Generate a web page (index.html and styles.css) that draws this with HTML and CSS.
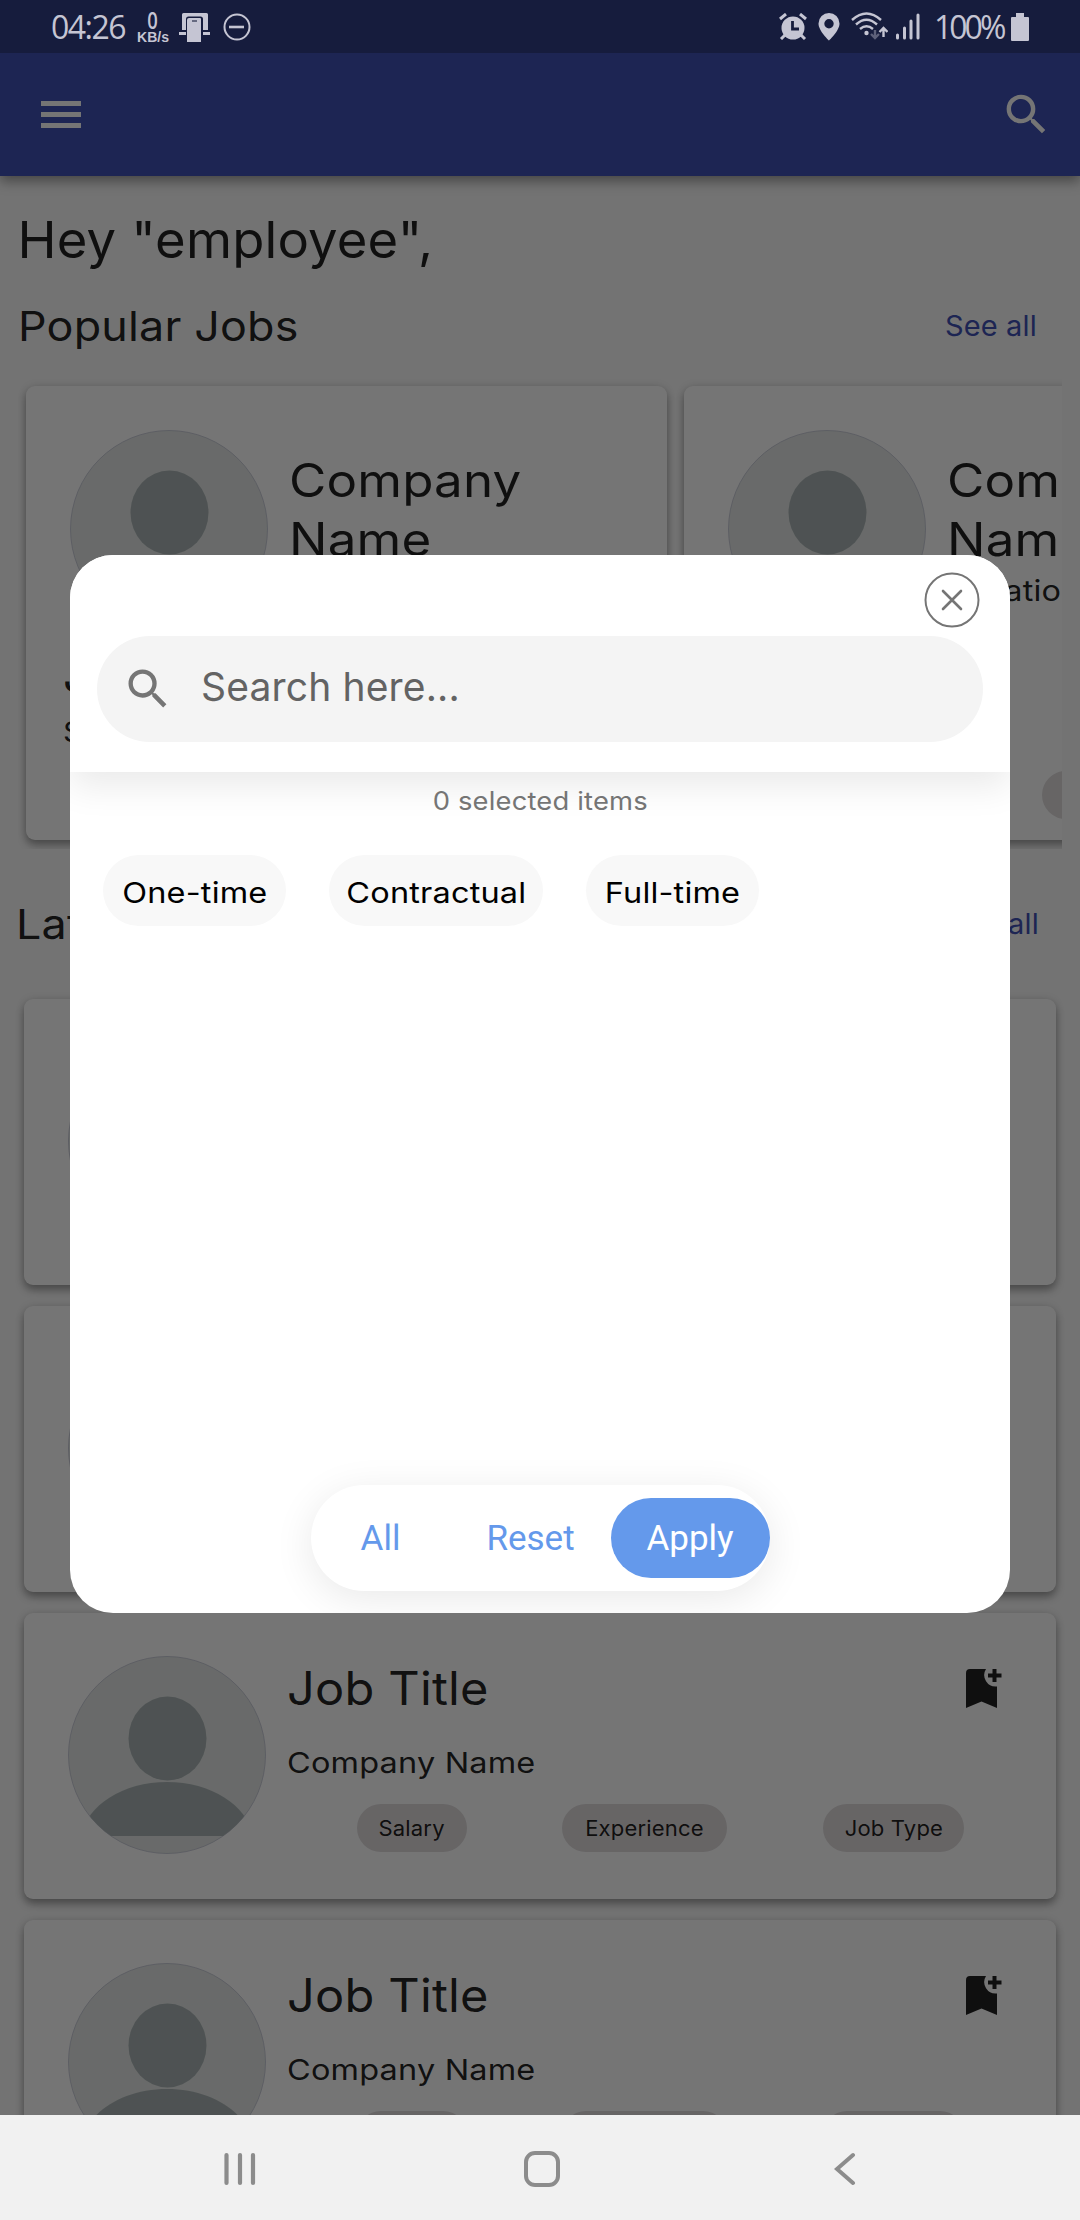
FILE: index.html
```html
<!DOCTYPE html>
<html lang="en">
<head>
<meta charset="utf-8">
<title>Jobs</title>
<link rel="stylesheet" href="styles.css">
</head>
<body>
<svg width="0" height="0" class="defs">
  <symbol id="search" viewBox="0 0 24 24"><path d="M15.5 14h-.79l-.28-.27A6.47 6.47 0 0 0 16 9.5 6.5 6.5 0 1 0 9.5 16c1.61 0 3.09-.59 4.23-1.57l.27.28v.79l5 4.99L20.49 19l-4.99-5zm-6 0C7.01 14 5 11.99 5 9.5S7.01 5 9.5 5 14 7.01 14 9.5 11.99 14 9.5 14z"/></symbol>
  <symbol id="avatar" viewBox="0 0 198 198">
    <clipPath id="round"><circle cx="99" cy="99" r="98.5"/></clipPath>
    <circle cx="99" cy="99" r="98.5" fill="#e4e8e6" stroke="#c0c3d2" stroke-width=".8"/>
    <ellipse cx="99.500" cy="82.500" rx="39" ry="42" fill="#abb4b6"/>
    <path clip-path="url(#round)" d="M13 180C19 149 55 126 99 126s80 23 86 54z" fill="#abb4b6"/>
  </symbol>
  <symbol id="bookmark" viewBox="0 0 36 39"><path d="M4 0H20A11.500 11.500 0 0 0 31 17.500V39L15.500 32.500 0 39V4a4 4 0 0 1 4-4z"/><path d="M26.500 0h4v4.500h5v4h-5V13h-4V8.500H22v-4h4.500z"/></symbol>
</svg>
<div class="screen">
  <header class="status">
    <div class="status-left">
      <span class="clock">04:26</span>
      <span class="speed"><b>0</b><small>KB/s</small></span>
      <svg class="ic-phone" width="31" height="30" viewBox="0 0 31 30"><path d="M3 1.500Q3 0 4.500 0h23Q29 0 29 1.500V17h-5V6Q24 3.500 21.500 3.500h-12Q7 3.500 7 6v11H3zM0 19h7v3H0zM24 19h7v3h-7z"/><path d="M10 5h11q1 0 1 1v23H8V7q0-2 2-2z"/><path d="M13 7h5v2h-5z" fill="#666a80"/></svg>
      <svg class="ic-dnd" width="28" height="28" viewBox="0 0 28 28" fill="none" stroke="#c5c5d3" stroke-width="2"><circle cx="14" cy="14" r="12.500"/><path d="M6 14h15" stroke-width="2.600"/></svg>
    </div>
    <div class="status-right">
      <svg class="ic-alarm" width="28" height="27" viewBox="0 0 28 27"><circle cx="14" cy="15" r="11.500"/><path d="M1 6l6-5M27 6l-6-5M6 22l-4 4M22 22l4 4" stroke="#c5c5d3" stroke-width="3"/><path d="M13.500 8v8H20" fill="none" stroke="#161c3d" stroke-width="2.800"/></svg>
      <svg class="ic-pin" width="22" height="28" viewBox="0 0 22 28"><path fill-rule="evenodd" d="M11 0a10.500 10.500 0 0 1 10.500 10.500C21.500 18 11 27.500 11 27.500S.5 18 .5 10.500A10.500 10.500 0 0 1 11 0zm0 6a4.700 4.700 0 1 0 0 9.400A4.700 4.700 0 0 0 11 6z"/></svg>
      <svg class="ic-wifi" width="37" height="28" viewBox="0 0 37 28"><g fill="none" stroke="#c5c5d3" stroke-width="2.400"><path d="M1 8Q15.500-5 30 8M5 12.500Q15.500 3 26 12.500M9 17q6.500-5.500 13 0"/><path d="M32.500 25v-8M28.500 20l4-4 4 4"/><path d="M24 18v8M20 22l4 4 4-4" stroke="#5d607a"/></g><circle cx="15.500" cy="21" r="2.200"/></svg>
      <svg class="ic-signal" width="24" height="27" viewBox="0 0 24 27"><g stroke="#c5c5d3" stroke-width="3" stroke-linecap="round"><path d="M1.500 22v3M8.500 15v10M15 8v17M22 2v23"/></g></svg>
      <span class="pct">100%</span>
      <svg class="ic-batt" width="18" height="28" viewBox="0 0 18 28"><path d="M5 0h8v4h4q1 0 1 1v22q0 1-1 1H1q-1 0-1-1V5q0-1 1-1h4z"/></svg>
    </div>
  </header>
  <nav class="appbar">
    <div class="menu"><i></i><i></i><i></i></div>
    <svg class="appbar-search" width="53" height="53"><use href="#search"/></svg>
  </nav>
  <main>
    <h1>Hey "employee",</h1>
    <div class="section"><h2>Popular Jobs</h2><a>See all</a></div>
    <div class="carousel">
      <article class="pop-card">
        <div class="pop-head"><svg class="avatar"><use href="#avatar"/></svg><div><h3>Company<br>Name</h3><p>Location</p></div></div>
        <h4>Job Title</h4><p class="salary">Salary</p>
        <div class="pop-chips"><span class="chip"><span>Salary</span></span><span class="chip exp"><span>Experience</span></span></div>
      </article>
      <article class="pop-card">
        <div class="pop-head"><svg class="avatar"><use href="#avatar"/></svg><div><h3>Company<br>Name</h3><p>Location</p></div></div>
        <h4>Job Title</h4><p class="salary">Salary</p>
        <div class="pop-chips"><span class="chip"><span>Salary</span></span><span class="chip exp"><span>Experience</span></span></div>
      </article>
    </div>
    <div class="section latest"><h2>Latest Jobs</h2><a>See all</a></div>
    <div class="list">
      <article class="job"><svg class="avatar"><use href="#avatar"/></svg></article>
      <article class="job"><svg class="avatar"><use href="#avatar"/></svg></article>
      <article class="job">
        <svg class="avatar"><use href="#avatar"/></svg>
        <div class="job-body">
          <div class="job-top"><h3>Job Title</h3><svg class="mark" width="36" height="39"><use href="#bookmark"/></svg></div>
          <p>Company Name</p>
          <div class="chips"><span class="chip"><span>Salary</span></span><span class="chip exp"><span>Experience</span></span><span class="chip type"><span>Job Type</span></span></div>
        </div>
      </article>
      <article class="job">
        <svg class="avatar"><use href="#avatar"/></svg>
        <div class="job-body">
          <div class="job-top"><h3>Job Title</h3><svg class="mark" width="36" height="39"><use href="#bookmark"/></svg></div>
          <p>Company Name</p>
          <div class="chips"><span class="chip"><span>Salary</span></span><span class="chip exp"><span>Experience</span></span><span class="chip type"><span>Job Type</span></span></div>
        </div>
      </article>
    </div>
  </main>
  <footer class="sysnav">
    <svg width="32" height="34" viewBox="0 0 32 34"><path d="M2.500 3v28M16 3v28M29 3v28" stroke="#8c8c8c" stroke-width="4.200" stroke-linecap="round"/></svg>
    <svg class="home" width="36" height="36" viewBox="0 0 36 36"><rect x="2" y="2" width="32" height="32" rx="9" fill="none" stroke="#8c8c8c" stroke-width="4"/></svg>
    <svg width="22" height="34" viewBox="0 0 22 34"><path d="M19 3L3 17l16 14" fill="none" stroke="#8c8c8c" stroke-width="4" stroke-linecap="round"/></svg>
  </footer>
  <div class="scrim"></div>
  <section class="dialog">
    <div class="dialog-head">
      <svg class="close" width="56" height="56" viewBox="0 0 56 56" fill="none" stroke="#757575" stroke-width="2"><circle cx="28" cy="28" r="26.500"/><path d="M19 19l18 18M37 19L19 37" stroke-width="2.600" stroke-linecap="round"/></svg>
      <div class="field"><svg width="52" height="52"><use href="#search"/></svg><span>Search here...</span></div>
    </div>
    <p class="count">0 selected items</p>
    <div class="options"><div class="one"><span>One-time</span></div><div class="contract"><span>Contractual</span></div><div class="full"><span>Full-time</span></div></div>
    <div class="actions"><span class="all">All</span><span class="reset">Reset</span><span class="apply">Apply</span></div>
  </section>
</div>
</body>
</html>
```
FILE: styles.css
```css
* { box-sizing: border-box; }
body { margin: 0; font-family: Inter, "Liberation Sans", sans-serif; }
h1, h2, h3, h4, p { margin: 0; font-weight: 400; }
svg { display: block; flex: none; }
.defs { position: absolute; }
.screen { position: relative; width: 1080px; height: 2220px; overflow: hidden; display: flex; flex-direction: column; background: #fafafa; color: rgba(0,0,0,.87); letter-spacing: .16px; }

/* wide letterforms */
h1, h2, h3, h4, .pop-head p, .salary, .job-body p { transform-origin: 0 50%; white-space: nowrap; }
h1 { transform: scaleX(1.031); }
h2 { transform: scaleX(1.094); }
h3 { transform: scaleX(1.11); }
h4 { transform: scaleX(1.11); }
.pop-head p, .salary, .job-body p { transform: scaleX(1.12); }

.status { position: relative; z-index: 5; height: 53px; flex: none; display: flex; justify-content: space-between; padding: 0 51px; background: #161c3d; color: #c5c5d3; fill: #c5c5d3; font-family: "Open Sans", sans-serif; letter-spacing: 0; }
.status-left, .status-right { display: flex; align-items: flex-start; white-space: nowrap; }
.clock { width: 86px; font-size: 32px; line-height: 54px; letter-spacing: -1.5px; }
.speed { width: 32px; margin-top: 9px; display: flex; flex-direction: column; align-items: center; }
.speed b { font-size: 23px; line-height: 23px; font-weight: 600; transform: scaleX(.8); }
.speed small { font: bold 14px/10px "Liberation Sans", sans-serif; }
.ic-phone { margin: 13px 0 0 10px; }
.ic-dnd { margin: 13px 0 0 13px; }
.ic-alarm { margin-top: 13px; }
.ic-pin { margin: 13px 0 0 11px; }
.ic-wifi { margin: 12px 0 0 11px; }
.ic-signal { margin: 13px 0 0 8px; }
.pct { width: 77px; margin-left: 14px; font-size: 32px; line-height: 54px; letter-spacing: -3px; }
.ic-batt { margin-top: 13px; }

.appbar { position: relative; height: 123px; flex: none; display: flex; justify-content: space-between; align-items: center; padding: 0 27px 0 41px; background: #3f51b5; fill: #fff; box-shadow: 0 5px 12px rgba(0,0,0,.4); }
.menu { display: flex; flex-direction: column; gap: 6px; }
.menu i { width: 40px; height: 5px; background: #fff; }

main { flex: 1; min-height: 0; overflow: hidden; padding-top: 34px; }
h1 { padding-left: 17px; font-size: 51px; line-height: 60px; }
.section { display: flex; justify-content: space-between; margin-top: 31px; padding: 0 43px 0 18px; line-height: 50px; }
.section h2 { font-size: 41px; }
.section a { font-size: 28px; color: #3f51b5; transform: scaleX(1.035); transform-origin: 100% 50%; }
.section.latest { margin-top: 50px; padding: 0 41px 0 16px; }
.carousel { display: flex; gap: 17px; margin: 27px 18px 0; padding: 8px 8px 9px; overflow: hidden; }
.pop-card, .job { background: #fff; border-radius: 9px; box-shadow: 0 5px 9px rgba(0,0,0,.32), 0 1px 10px rgba(0,0,0,.12); }
.pop-card { width: 641px; height: 454px; flex: none; padding: 44px 37px; }
.pop-head { display: flex; height: 222px; padding-left: 7px; gap: 21px; }
.avatar { width: 198px; height: 198px; }
.pop-head h3 { margin-top: 21px; font-size: 46px; line-height: 59px; }
.pop-head p { margin-top: 2px; font-size: 29px; line-height: 40px; }
h4 { font-size: 41px; line-height: 50px; }
.salary { margin-top: 10px; font-size: 28px; line-height: 40px; }
.pop-chips { display: flex; gap: 120px; padding-left: 91px; margin-top: 19px; }
.chip { width: 110px; height: 48px; border-radius: 24px; background: #e0dcdd; font-size: 21px; line-height: 49px; text-align: center; white-space: nowrap; }
.chip span { display: inline-block; transform: scaleX(1.05); }
.exp { width: 165px; }
.type { width: 141px; }
.list { margin: 49.500px 24px 0; display: flex; flex-direction: column; gap: 21px; }
.job { height: 286px; flex: none; display: flex; gap: 21px; padding: 43px 44px; }
.job-body { flex: 1; }
.job-top { display: flex; justify-content: space-between; height: 80px; padding-right: 10px; }
.job-top h3 { font-size: 46px; line-height: 64px; transform: scaleX(1.06); }
.mark { margin-top: 13px; fill: rgba(0,0,0,.87); }
.job-body p { font-size: 29px; line-height: 54px; }
.chips { display: flex; justify-content: space-around; margin: 14px 0 0 22px; }

.sysnav { position: relative; z-index: 5; height: 105px; flex: none; display: flex; justify-content: space-between; align-items: center; padding: 3px 224px 0 224px; background: #f1f1f1; }
.home { margin-right: 7px; }
.scrim { position: absolute; inset: 53px 0 105px; background: rgba(0,0,0,.54); }

.dialog { position: absolute; left: 70px; top: 555px; width: 940px; height: 1058px; border-radius: 43px; overflow: hidden; background: #fff; display: flex; flex-direction: column; align-items: center; color: #757575; }
.dialog-head { width: 940px; height: 217px; background: #fff; box-shadow: 0 14px 34px rgba(0,0,0,.085); display: flex; flex-direction: column; align-items: flex-end; padding: 17px 27px 0; }
.close { margin-right: 3px; }
.field { align-self: stretch; height: 106px; margin-top: 8px; border-radius: 53px; background: #f4f4f4; display: flex; align-items: center; padding-left: 25px; fill: #757575; color: #636363; font-size: 39px; }
.field span { margin: -5px 0 0 27px; line-height: 50px; }
.count { position: relative; font-size: 25px; line-height: 30px; margin-top: 14px; transform: scaleX(1.095); }
.options { align-self: stretch; display: flex; gap: 43px; margin-top: 39px; padding-left: 33px; color: #000; }
.options div { height: 71px; border-radius: 36px; background: #f8f8f8; font-size: 29px; line-height: 75px; text-align: center; white-space: nowrap; }
.options span { display: inline-block; transform: scaleX(1.12); }
.options .one { width: 183px; }
.options .contract { width: 214px; }
.options .full { width: 173px; }
.actions { width: 459px; height: 106px; margin-top: 559px; border-radius: 53px; display: flex; align-items: center; background: #fff; box-shadow: 0 8px 40px rgba(0,0,0,.09); font: 35px/81px Roboto, sans-serif; letter-spacing: 0; color: #6499eb; text-align: center; }
.actions .all { width: 140px; }
.actions .reset { width: 160px; }
.actions .apply { width: 159px; height: 80px; border-radius: 40px; background: #6499eb; color: #fff; }
```
